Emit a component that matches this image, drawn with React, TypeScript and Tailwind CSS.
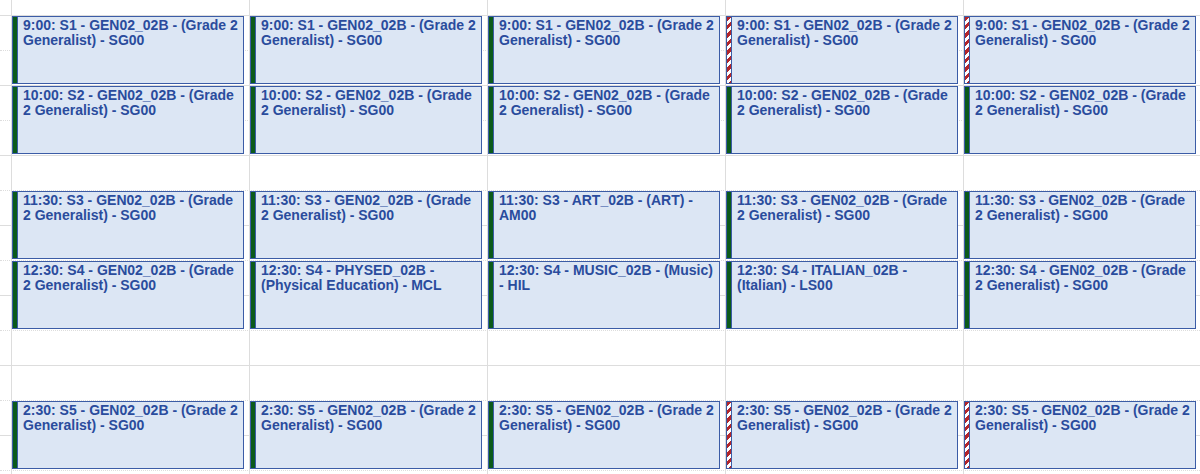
import React from "react";

type Lesson = {
  text: string;
  striped?: boolean;
};

type Slot = Lesson | { gap: number };

const gen = (time: string, s: string) =>
  `${time}: ${s} - GEN02_02B - (Grade 2 Generalist) - SG00`;

const columns: Slot[][] = [
  [
    { text: gen("9:00", "S1") },
    { text: gen("10:00", "S2") },
    { gap: 35 },
    { text: gen("11:30", "S3") },
    { text: gen("12:30", "S4") },
    { gap: 70 },
    { text: gen("2:30", "S5") },
  ],
  [
    { text: gen("9:00", "S1") },
    { text: gen("10:00", "S2") },
    { gap: 35 },
    { text: gen("11:30", "S3") },
    { text: "12:30: S4 - PHYSED_02B - (Physical Education) - MCL" },
    { gap: 70 },
    { text: gen("2:30", "S5") },
  ],
  [
    { text: gen("9:00", "S1") },
    { text: gen("10:00", "S2") },
    { gap: 35 },
    { text: "11:30: S3 - ART_02B - (ART) - AM00" },
    { text: "12:30: S4 - MUSIC_02B - (Music) - HIL" },
    { gap: 70 },
    { text: gen("2:30", "S5") },
  ],
  [
    { text: gen("9:00", "S1"), striped: true },
    { text: gen("10:00", "S2") },
    { gap: 35 },
    { text: gen("11:30", "S3") },
    { text: "12:30: S4 - ITALIAN_02B - (Italian) - LS00" },
    { gap: 70 },
    { text: gen("2:30", "S5"), striped: true },
  ],
  [
    { text: gen("9:00", "S1"), striped: true },
    { text: gen("10:00", "S2") },
    { gap: 35 },
    { text: gen("11:30", "S3") },
    { text: gen("12:30", "S4") },
    { gap: 70 },
    { text: gen("2:30", "S5"), striped: true },
  ],
];

// half hour rows, 9:00 onwards
const rows = Array.from({ length: 14 }, (_, i) => i);

function LessonBlock({ lesson }: { lesson: Lesson }) {
  return (
    <div className="h-[70px] py-px">
      <div className="flex h-[68px] border border-[#3b5ca6] bg-[#dce6f4]">
        <div
          className={`w-[5px] shrink-0 border-r border-[#3b5ca6] ${
            lesson.striped
              ? "bg-[repeating-linear-gradient(135deg,#b3262b_0px,#b3262b_3px,#ffffff_3px,#ffffff_6px)]"
              : "bg-[#0b5a1a]"
          }`}
        />
        <div className="pl-[5px] pr-[1px] pt-px text-[14px] leading-[15px] font-bold text-[#2a4c9d]">
          {lesson.text}
        </div>
      </div>
    </div>
  );
}

export default function App() {
  return (
    <div className="relative h-[474px] w-[1200px] overflow-hidden bg-white font-['Liberation_Sans',Arial,sans-serif]">
      {/* slot lines */}
      <div className="pt-[15px]">
        {rows.map((i) => (
          <div
            key={i}
            className={`h-[35px] border-t border-[#dddddd] ${
              i % 2 === 0 ? "border-solid" : "border-dotted"
            }`}
          />
        ))}
      </div>

      {/* day columns */}
      <div className="absolute inset-0 flex pl-[11px]">
        {columns.map((col, c) => (
          <div
            key={c}
            className="w-[238px] shrink-0 border-l border-[#dddddd] pt-[15px] pr-[5px]"
          >
            {col.map((slot, j) =>
              "gap" in slot ? (
                <div key={j} style={{ height: slot.gap }} />
              ) : (
                <LessonBlock key={j} lesson={slot} />
              ),
            )}
          </div>
        ))}
      </div>
    </div>
  );
}
